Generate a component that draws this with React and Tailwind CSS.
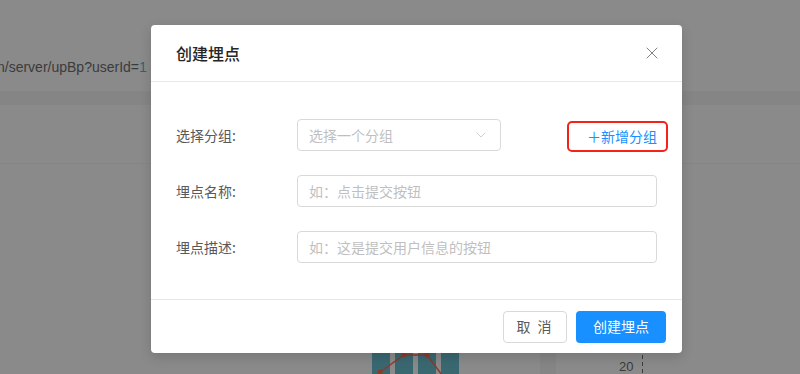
import { X, ChevronDown } from 'lucide-react'

const cjk = { fontFamily: '"Noto Sans CJK SC", "Noto Sans", sans-serif' }

function BackgroundPage() {
  return (
    <div className="flex flex-col h-[374px] overflow-hidden bg-[#8a8a8a]">
      <div className="h-[58px]" />
      <div className="h-[18px] leading-[18px] text-[14px] text-[#3b3b3b] -ml-[3px] whitespace-nowrap" style={{ fontFamily: '"Liberation Sans", Arial, sans-serif' }}>
        n/server/upBp?userId=<span className="text-[#1f6a72]">1</span>
      </div>
      <div className="h-[15px]" />
      <div className="h-[14px] bg-[#858585]" />
      <div className="h-[58px]" />
      <div className="h-px bg-[#858585]" />
      <div className="flex-1" />
      <svg width="800" height="40" viewBox="0 0 800 40" className="block shrink-0">
        <rect x="540" y="0" width="16" height="40" fill="#858585" />
        <rect x="372" y="8" width="18" height="32" fill="#3a6871" />
        <rect x="395" y="8" width="18" height="32" fill="#3a6871" />
        <rect x="418" y="8" width="18" height="32" fill="#3a6871" />
        <rect x="441" y="8" width="18" height="32" fill="#3a6871" />
        <polyline points="380,38 404,21 427,21 442,41" fill="none" stroke="#8a3b2c" strokeWidth="1.5" />
        <circle cx="380" cy="38" r="2.5" fill="#8a3b2c" />
        <circle cx="404" cy="21" r="2.5" fill="#8a3b2c" />
        <circle cx="427" cy="21" r="2.5" fill="#8a3b2c" />
        <line x1="642.5" y1="0" x2="642.5" y2="40" stroke="#3b3b3b" strokeWidth="1" strokeDasharray="4 3" />
        <text x="619" y="37" fontSize="13" fill="#3b3b3b" fontFamily="Liberation Sans, Arial, sans-serif">20</text>
      </svg>
    </div>
  )
}

function FormRow({ label, children }) {
  return (
    <div className="flex items-center h-8">
      <div className="w-[121px] shrink-0 text-[14px] text-[#595959]">{label}</div>
      {children}
    </div>
  )
}

export default function App() {
  return (
    <div className="relative w-[800px] h-[374px] overflow-hidden" style={cjk}>
      <BackgroundPage />

      <div className="absolute left-[151px] top-[25px] w-[531px] h-[328px] bg-white rounded-[4px] shadow-[0_4px_12px_rgba(0,0,0,0.15)] flex flex-col">
        <header className="h-[57px] shrink-0 flex items-center justify-between pl-[25px] pr-[20px] border-b border-[#e8e8e8]">
          <h1 className="text-[16px] font-medium text-[#262626]">创建埋点</h1>
          <X size={20} strokeWidth={1.2} className="text-[#808080]" />
        </header>

        <div className="flex-1 flex flex-col gap-6 pt-[37px] pl-[25px] pr-[25px]">
          <FormRow label="选择分组:">
            <div className="w-[204px] h-8 flex items-center justify-between px-[11px] border border-[#d9d9d9] rounded-[4px] text-[14px] text-[#bfbfbf]">
              <span>选择一个分组</span>
              <ChevronDown size={16} strokeWidth={1.1} className="text-[#bfbfbf]" />
            </div>
            <div className="flex-1 flex justify-end">
              <button type="button" className="h-[31px] mt-[2px] -mr-[11px] pl-[18px] pr-[9px] border-2 border-[#f5221b] rounded-[5px] text-[14px] text-[#1890ff] leading-none flex items-center">
                ＋新增分组
              </button>
            </div>
          </FormRow>
          <FormRow label="埋点名称:">
            <div className="flex-1 h-8 flex items-center px-[11px] border border-[#d9d9d9] rounded-[4px] text-[14px] text-[#bfbfbf]">
              如：点击提交按钮
            </div>
          </FormRow>
          <FormRow label="埋点描述:">
            <div className="flex-1 h-8 flex items-center px-[11px] border border-[#d9d9d9] rounded-[4px] text-[14px] text-[#bfbfbf]">
              如：这是提交用户信息的按钮
            </div>
          </FormRow>
        </div>

        <footer className="h-[54px] shrink-0 border-t border-[#e8e8e8] flex items-center justify-end gap-[9px] pr-4">
          <button type="button" className="w-16 h-8 border border-[#d9d9d9] rounded-[4px] bg-white text-[14px] text-[#595959] tracking-[2px]">
            取 消
          </button>
          <button type="button" className="w-[90px] h-8 rounded-[4px] bg-[#1890ff] text-[14px] text-white">
            创建埋点
          </button>
        </footer>
      </div>
    </div>
  )
}
